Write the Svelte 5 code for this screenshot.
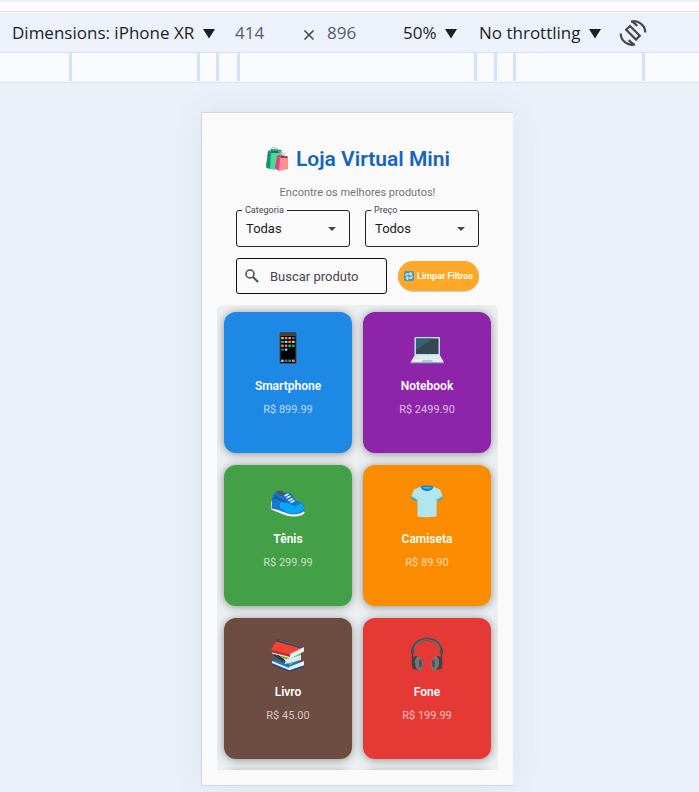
<script>
  const rulerSteps = [128, 19, 21, 237, 20, 19, 129, 3];
  const products = [
    { icon: 'phone', name: 'Smartphone', price: 'R$ 899.99' },
    { icon: 'laptop', name: 'Notebook', price: 'R$ 2499.90' },
    { icon: 'shoe', name: 'Tênis', price: 'R$ 299.99' },
    { icon: 'shirt', name: 'Camiseta', price: 'R$ 89.90' },
    { icon: 'books', name: 'Livro', price: 'R$ 45.00' },
    { icon: 'headphones', name: 'Fone', price: 'R$ 199.99' }
  ];
  const appColors = ['#ffb74d', '#ff9100', '#ff80ab', '#0288d1', '#26a69a', '#81d4fa', '#ff9100', '#ffb74d', '#ff9100', '#f06292', '#00bfa5', '#26a69a', '#0288d1', '#81d4fa'];
  let search = $state('');
</script>

{#snippet caret()}
  <svg class="caret" width="12" height="10" viewBox="0 0 12 10" aria-hidden="true"><path d="M0 0h12L6 9.500z" fill="#1f1f1f" /></svg>
{/snippet}

{#snippet drop()}
  <svg class="drop" width="8" height="4" viewBox="0 0 8 4" aria-hidden="true"><path d="M0 0h8L4 4z" fill="#49454f" /></svg>
{/snippet}

{#snippet picture(kind)}
  <svg class="picture" viewBox="0 0 36 36" aria-hidden="true">
    {#if kind === 'phone'}
      <rect x="9.500" y="2" width="17" height="32" rx="1.500" fill="#5a4a42" />
      <rect x="10.500" y="3" width="15" height="30" rx="1" fill="#000" />
      <path d="M10 2.500h16v3.500H10z" fill="#424242" />
      {#each appColors as color, i}
        <rect x={11.2 + (i % 4) * 3.6} y={7 + Math.floor(i / 4) * 3.8} width="2.600" height="2.300" rx=".4" fill={color} />
      {/each}
      {#each ['#81d4fa', '#0288d1', '#00bfa5', '#ff80ab'] as color, i}
        <rect x={11.2 + i * 3.6} y="29.500" width="2.600" height="2.600" rx=".4" fill={color} />
      {/each}
    {:else if kind === 'laptop'}
      <rect x="5.500" y="7" width="25.500" height="19" rx="1" fill="#b9e0ee" />
      <rect x="7" y="8.500" width="22.500" height="15.500" fill="#37474f" />
      <path d="M7 8.500h17L7 20z" fill="#2f6470" />
      <path d="M5.500 25.500h25.500l4 7H1.500z" fill="#eceff1" />
      <path d="M6.500 26.500h23.500l1.500 2.500H5z" fill="#cfd8dc" />
      <path d="M7 27.700h23M12 26v3M17 26v3M22 26v3M26 26v3" stroke="#fff" stroke-width=".6" />
      <path d="M13.500 30h9.500l1 2H12.500z" fill="#a7cbdc" />
      <path d="M1.500 32.300h33.500v1H1.500z" fill="#82b8c8" />
    {:else if kind === 'shoe'}
      <path d="M1.500 18c-.7 3-.9 6-.2 8.500 6 2 14 7 22 7 6 0 11-1.500 11.500-4.500z" fill="#f5f5f5" />
      <path d="M2 17c0-5 2-8 4.500-8.500 1 3 4 4 8 1.500 3-1 6 0 7.500 2 2 4 4 6 8 7 3 1 5 4 4.500 7-.5 5-10 6.500-17 4.500C11 28 6 26 1.500 25.500z" fill="#1976d2" />
      <path d="M10 20c4-1 8-.5 11.500 2 2 1.500 5 2 8.500-1.500 2-.5 3.500 1.500 4 4-2 6-11 7-16 5.500-4-1.500-5-4-8-5z" fill="#03a9f4" />
      <path d="M3 16c3-2 6-1 8 2M5 12c3 4 7 6 12 7" fill="none" stroke="#0d5aa7" stroke-width="1.500" />
      <path d="M6.500 9c1-2 5-2 8 1l-2 3c-3 0-5-1-6-4z" fill="#455a64" />
      <path d="M14 10c3 0 6 1 8 4l-3 4c-2-2-4-3-6-4z" fill="#1565c0" />
      <path d="M14.500 13l4-2M16.500 15l4-2M18.500 17.500l4-2M20.500 19.500l4-2" stroke="#f5f5f5" stroke-width="1.400" />
    {:else if kind === 'shirt'}
      <path d="M12 3.500L5 6.500 2 14l5.500 3.500 1-2V33.500q9 1.500 19 0V15.500l1 2 5.500-3.500-3-7.500-7-3c-3 3-9 3-12 0z" fill="#b3e5ed" />
      <path d="M11.500 3.500c1 6 12 6 13 0-4-1.500-9-1.500-13 0z" fill="#0288d1" />
      <path d="M13 4.200c2 2 8 2 10 0-3-.7-7-.7-10 0z" fill="#4db6ce" />
      <path d="M2 14l5.500 3.500M34 14l-5.500 3.500" stroke="#29a9e0" stroke-width="2" />
      <path d="M8.500 15v14M27.500 15v14" stroke="#8ccfdd" stroke-width=".7" />
    {:else if kind === 'books'}
      <path d="M2 25l14-4 17 6-14 7z" fill="#1976d2" />
      <path d="M19 31l15-6v4.500L19 34.500z" fill="#eceff1" />
      <path d="M2 25v3l17 6.500 15-5v1.500l-15 4.500L2 29z" fill="#0d47a1" />
      <path d="M2 25l17 7v2L2 27z" fill="#e3f2fd" />
      <path d="M5 17l17 2 9-2v5l-11 7z" fill="#7cb342" />
      <path d="M13 24l18-5v5l-16 4z" fill="#d7ebf2" />
      <path d="M2 17l6 1 8 8-2 1.500L4 23z" fill="#455a64" />
      <path d="M4 19l9 6M6 18l9 7" stroke="#212121" stroke-width="1" />
      <path d="M7 4l27 7-14 8L1 14z" fill="#f44336" />
      <path d="M8 3l26 8-3 1.500L5 5z" fill="#424242" />
      <path d="M9 4l23 7" stroke="#777" stroke-width=".7" />
      <path d="M20 18l14-7v4.500l-14 7z" fill="#eceff1" />
      <path d="M1 14l19 4.500V21L1 16.500z" fill="#c62828" />
      <path d="M2 17l18 4.500" stroke="#eceff1" stroke-width="1.200" />
    {:else}
      <path d="M3.500 18V16C4.500-1 31.500-1 32.500 16v2" fill="none" stroke="#4f4f4f" stroke-width="3.200" />
      <path d="M5 13.500C8 .5 28 .5 31 13.500" fill="none" stroke="#757575" stroke-width="1.200" />
      <path d="M3.500 18v8M32.500 18v8" stroke="#424242" stroke-width="1.200" />
      <path d="M8 20c-6 0-6 6-4.500 13L9 34z" fill="#424242" />
      <path d="M28 20c6 0 6 6 4.500 13L27 34z" fill="#424242" />
      <ellipse cx="10" cy="27.500" rx="4" ry="7" fill="#757575" transform="rotate(-8 10 27.500)" />
      <ellipse cx="26" cy="27.500" rx="4" ry="7" fill="#757575" transform="rotate(8 26 27.500)" />
      <ellipse cx="11.500" cy="27.500" rx="1.500" ry="4" fill="#515151" />
      <ellipse cx="24.500" cy="27.500" rx="1.500" ry="4" fill="#515151" />
    {/if}
  </svg>
{/snippet}

<div class="page">
  <div class="strip"></div>
  <header class="toolbar">
    <div class="pick">
      <select aria-label="Dimensions"><option>Dimensions: iPhone XR</option></select>
      {@render caret()}
    </div>
    <div class="size">
      <input type="text" value="414" aria-label="Width" />
      <svg width="12" height="12" viewBox="0 0 12 12" aria-hidden="true"><path d="M1.500 1.500l9 9M10.500 1.500l-9 9" stroke="#474747" stroke-width="1.600" /></svg>
      <input type="text" value="896" aria-label="Height" />
    </div>
    <div class="pick">
      <select aria-label="Zoom"><option>50%</option></select>
      {@render caret()}
    </div>
    <div class="pick throttle">
      <select aria-label="Throttling"><option>No throttling</option></select>
      {@render caret()}
    </div>
    <button class="rotate" type="button" aria-label="Rotate">
      <svg width="28" height="28" viewBox="0 0 28 28" fill="none" stroke="#474747" stroke-width="2.200" aria-hidden="true">
        <path d="M11 7L7.200 10.800l9.800 9.800 3.800-3.800z" />
        <path d="M12 2.600C19 .8 26.300 6 26.300 13.500M15.800 1.500l-1.500 1.800 4 3.500" />
        <path d="M16 25.400C9 27.200 1.700 22 1.700 14.500M12.200 26.500l1.500-1.800-4-3.500" />
      </svg>
    </button>
  </header>
  <div class="ruler">
    {#each rulerSteps as step}
      <span style:width="{step}px"></span>
    {/each}
  </div>
  <main class="stage">
    <section class="device">
      <h1>
        <svg width="24" height="24" viewBox="0 0 24 24" aria-hidden="true">
          <path d="M3 4l4-2 10 1-1 17-6 3-9-2z" fill="#4fd69a" />
          <path d="M3 4l3 2-1 16-4-2z" fill="#159177" />
          <path d="M3 4l4-2 9 1-2 3H6z" fill="#286b61" />
          <path d="M5 5C6-1 11-1 11 4M8 4c1-4 6-4 6 1" fill="none" stroke="#7adfc1" />
          <path d="M12 9l11 1 0 12-9 2-3-3z" fill="#ff8f93" />
          <path d="M12 9l3 2-1 13-4-3z" fill="#d84382" />
          <path d="M12 9l3-1 8 1.500-1 1.500-7-.5z" fill="#7c3440" />
          <path d="M15 10c0-5 5-5 5 0" fill="none" stroke="#f48fb1" />
        </svg>
        Loja Virtual Mini
      </h1>
      <p class="intro">Encontre os melhores produtos!</p>
      <form class="filters" onsubmit={(e) => e.preventDefault()}>
        <div class="row selects">
          <div class="field">
            <label for="category">Categoria</label>
            <select id="category"><option>Todas</option></select>
            {@render drop()}
          </div>
          <div class="field">
            <label for="price">Preço</label>
            <select id="price"><option>Todos</option></select>
            {@render drop()}
          </div>
        </div>
        <div class="row">
          <div class="search">
            <svg width="14" height="14" viewBox="0 0 14 14" fill="none" stroke="#49454f" aria-hidden="true"><circle cx="5" cy="5" r="4" stroke-width="1.500" /><path d="M8 8l5 5" stroke-width="1.900" /></svg>
            <input type="text" aria-label="Buscar produto" placeholder="Buscar produto" bind:value={search} />
          </div>
          <button class="clear" type="button" onclick={() => (search = '')}>
            <svg width="10" height="10" viewBox="0 0 10 10" aria-hidden="true"><rect width="10" height="10" rx="1" fill="#5499b3" /><path d="M2 5V3h5M6 1l2 2-2 1.500M8 5v2H3M4 5.500L2 7l2 2" fill="none" stroke="#fff" /></svg>
            Limpar Filtros
          </button>
        </div>
      </form>
      <div class="catalog">
        {#each products as product}
          <article class="card {product.icon}">
            {@render picture(product.icon)}
            <h2>{product.name}</h2>
            <p>{product.price}</p>
          </article>
        {/each}
        <div class="card"></div>
        <div class="card"></div>
      </div>
    </section>
  </main>
</div>

<style>
  .page {
    min-height: 100vh;
    background: #ebf0f9;
    font-family: Roboto, sans-serif;
    overflow: hidden;
  }
  select, input, button {
    appearance: none;
    border: 0;
    margin: 0;
    padding: 0;
    background: none;
    font: inherit;
    color: inherit;
    outline: 0;
  }
  svg { display: block; flex: none; }
  .strip {
    height: 9px;
    border-top: 2px solid #ebf0fa;
    border-bottom: 1px solid #dfe1e3;
    background: #fff;
  }
  .toolbar {
    display: flex;
    align-items: center;
    height: 39px;
    padding-left: 12px;
    border-top: 1px solid #fff;
    background: #edf1fa;
    color: #1f1f1f;
    font: 17px/26px "Open Sans", sans-serif;
  }
  .pick { display: grid; align-items: center; }
  .pick select, .pick .caret { grid-area: 1 / 1; }
  .pick select { padding-right: 20px; height: 28px; }
  .pick .caret { justify-self: end; margin-top: 2px; pointer-events: none; }
  .size {
    display: flex;
    align-items: center;
    gap: 12px;
    margin: 0 20px;
    color: #5a5d61;
  }
  .size input { width: 56px; height: 28px; }
  .size svg { margin-top: 5px; }
  .throttle { margin-left: 22px; }
  .rotate { margin-left: 18px; }
  .ruler {
    display: flex;
    justify-content: center;
    height: 28px;
    padding: 0 0 1px 15px;
    border: solid #d3e3fd;
    border-width: 1px 0;
    background: #f9fbff;
  }
  .ruler span {
    flex: none;
    box-sizing: border-box;
    border-left: 3px solid #d3e3fd;
  }
  .stage {
    display: flex;
    justify-content: center;
    padding: 29px 0 6px 15px;
  }
  .device {
    box-sizing: border-box;
    width: 312px;
    padding: 32px 15px 15px;
    border: solid #d3d8e0;
    border-width: 1px 0 1px 1px;
    background: #fafafa;
    box-shadow: 0 0 30px rgba(80, 110, 150, 0.09);
  }
  h1 {
    display: flex;
    align-items: center;
    justify-content: center;
    gap: 7px;
    margin: 0;
    color: #1565c0;
    font-size: 21px;
    font-weight: 600;
    line-height: 28px;
  }
  .intro {
    margin: 12px 0 9px;
    color: #757575;
    font-size: 11px;
    line-height: 16px;
    text-align: center;
  }
  .filters {
    display: grid;
    grid-template-columns: minmax(0, 1fr);
    gap: 11px;
    padding: 0 19px;
  }
  .row {
    display: flex;
    align-items: center;
    justify-content: space-between;
    gap: 11px;
  }
  .selects { gap: 15px; }
  .field {
    position: relative;
    flex: 1;
    display: grid;
    align-items: center;
    min-width: 0;
  }
  .field select, .drop { grid-area: 1 / 1; }
  .field select {
    width: 100%;
    height: 37px;
    padding: 0 9px;
    border: 1px solid #222;
    border-radius: 3px;
    color: #1d1b20;
    font-size: 13px;
  }
  .field .drop {
    justify-self: end;
    margin-right: 14px;
    pointer-events: none;
  }
  .field label {
    position: absolute;
    top: -5px;
    left: 6px;
    padding: 0 3px;
    background: #fafafa;
    color: #49454f;
    font-size: 9px;
    line-height: 11px;
  }
  .search {
    flex: 1;
    display: flex;
    align-items: center;
    gap: 11px;
    box-sizing: border-box;
    height: 36px;
    min-width: 0;
    padding: 0 8px;
    border: 1px solid #111;
    border-radius: 3px;
    color: #49454f;
  }
  .search input { flex: 1; min-width: 0; height: 30px; font-size: 13px; }
  .search input::placeholder { color: #49454f; opacity: 1; }
  .clear {
    display: flex;
    align-items: center;
    justify-content: center;
    gap: 3px;
    width: 81px;
    height: 30px;
    border-radius: 15px;
    background: #ffa726;
    box-shadow: 0 1px 1px rgba(0, 0, 0, 0.2);
    color: #fff;
    font-size: 9px;
    font-weight: 600;
    white-space: nowrap;
  }
  .catalog {
    display: grid;
    grid-template-columns: 1fr 1fr;
    grid-auto-rows: 141px;
    gap: 12px 11px;
    box-sizing: border-box;
    height: 465px;
    margin-top: 11px;
    padding: 7px;
    border-radius: 6px 6px 0 0;
    background: #eceff1;
    overflow: hidden;
  }
  .card {
    display: flex;
    flex-direction: column;
    align-items: center;
    box-sizing: border-box;
    padding-top: 18px;
    border-radius: 12px;
    background: #546e7a;
    box-shadow: 0 1px 8px rgba(0, 0, 0, 0.4);
    color: #fff;
  }
  .picture { width: 36px; height: 36px; }
  .phone { background: #1e88e5; }
  .laptop { background: #8e24aa; }
  .shoe { background: #43a047; }
  .shirt { background: #fb8c00; }
  .books { background: #6d4c41; }
  .headphones { background: #e53935; }
  .card h2 {
    margin: 12px 0 8px;
    font-size: 12px;
    font-weight: 600;
    line-height: 16px;
  }
  .card p {
    margin: 0;
    color: rgba(255, 255, 255, 0.7);
    font-size: 11px;
    line-height: 16px;
  }
</style>
